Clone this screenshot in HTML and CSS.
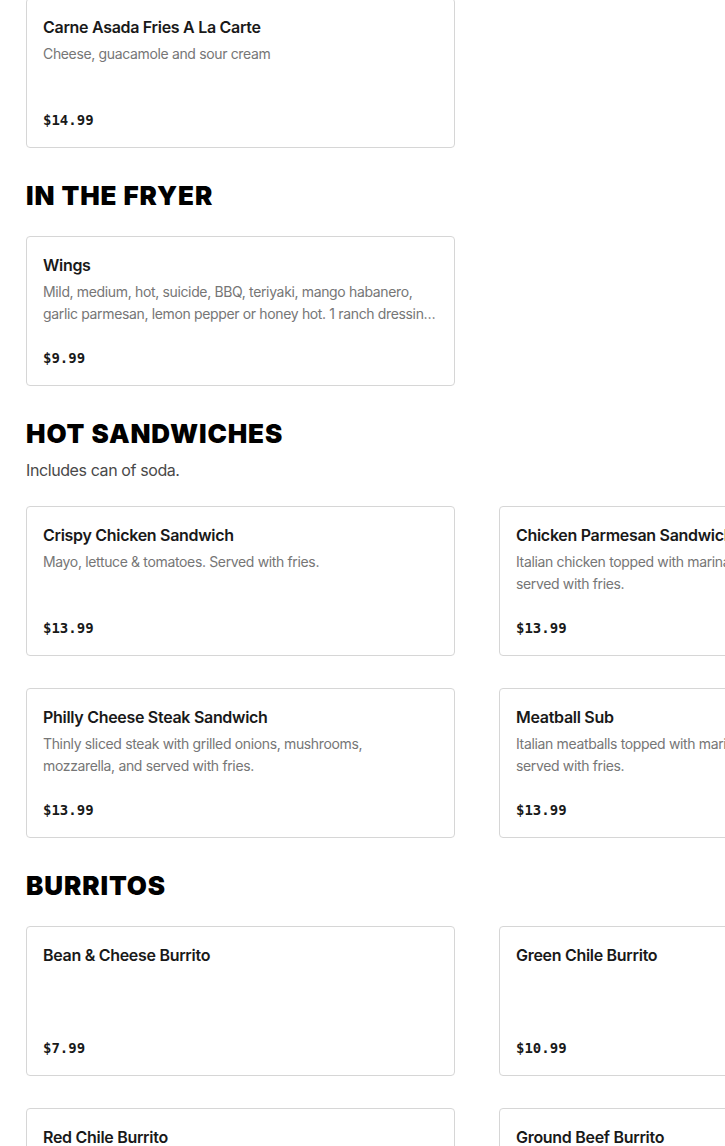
FILE: index.html
```html
<!DOCTYPE html>
<html lang="en">
<head>
<meta charset="utf-8">
<title>Menu</title>
<link rel="stylesheet" href="styles.css">
</head>
<body>
<main class="menu">
  <section class="section section-first">
    <div class="grid">
      <article class="card">
        <h3 class="item-name">Carne Asada Fries A La Carte</h3>
        <p class="item-desc">Cheese, guacamole and sour cream</p>
        <div class="item-price">$14.99</div>
      </article>
    </div>
  </section>

  <section class="section">
    <h2 class="section-title">IN THE FRYER</h2>
    <div class="grid">
      <article class="card">
        <h3 class="item-name">Wings</h3>
        <p class="item-desc">Mild, medium, hot, suicide, BBQ, teriyaki, mango habanero, garlic parmesan, lemon pepper or honey hot. 1 ranch dressing included with every order.</p>
        <div class="item-price">$9.99</div>
      </article>
    </div>
  </section>

  <section class="section">
    <h2 class="section-title">HOT SANDWICHES</h2>
    <p class="section-sub">Includes can of soda.</p>
    <div class="grid">
      <article class="card">
        <h3 class="item-name">Crispy Chicken Sandwich</h3>
        <p class="item-desc">Mayo, lettuce &amp; tomatoes. Served with fries.</p>
        <div class="item-price">$13.99</div>
      </article>
      <article class="card">
        <h3 class="item-name">Chicken Parmesan Sandwich</h3>
        <p class="item-desc">Italian chicken topped with marinara sauce, mozzarella and served with fries.</p>
        <div class="item-price">$13.99</div>
      </article>
      <article class="card">
        <h3 class="item-name">Philly Cheese Steak Sandwich</h3>
        <p class="item-desc">Thinly sliced steak with grilled onions, mushrooms, mozzarella, and served with fries.</p>
        <div class="item-price">$13.99</div>
      </article>
      <article class="card">
        <h3 class="item-name">Meatball Sub</h3>
        <p class="item-desc">Italian meatballs topped with marinara sauce, mozzarella and served with fries.</p>
        <div class="item-price">$13.99</div>
      </article>
    </div>
  </section>

  <section class="section">
    <h2 class="section-title">BURRITOS</h2>
    <div class="grid">
      <article class="card">
        <h3 class="item-name">Bean &amp; Cheese Burrito</h3>
        <div class="item-price">$7.99</div>
      </article>
      <article class="card">
        <h3 class="item-name">Green Chile Burrito</h3>
        <div class="item-price">$10.99</div>
      </article>
      <article class="card">
        <h3 class="item-name">Red Chile Burrito</h3>
        <div class="item-price">$10.99</div>
      </article>
      <article class="card">
        <h3 class="item-name">Ground Beef Burrito</h3>
        <div class="item-price">$10.99</div>
      </article>
    </div>
  </section>
</main>
</body>
</html>
```
FILE: styles.css
```css
html, body {
  margin: 0;
  padding: 0;
  overflow: hidden;
  background: #ffffff;
}
body {
  font-family: Inter, "Liberation Sans", Arial, sans-serif;
  color: #191919;
}
.menu {
  padding: 0 26px;
  width: 902px;
}
.section {
  padding-top: 32px;
}
.section-first {
  padding-top: 0;
  margin-top: -2px;
}
.section-title {
  margin: 0 0 24px;
  font-size: 26px;
  line-height: 32px;
  font-weight: 900;
  color: #000000;
  letter-spacing: 0.9px;
}
.section-sub {
  margin: -16px 0 24px;
  font-size: 16px;
  line-height: 24px;
  color: #494949;
  letter-spacing: -0.4px;
}
.grid {
  display: grid;
  grid-template-columns: 429px 429px;
  column-gap: 44px;
  row-gap: 32px;
}
.card {
  box-sizing: border-box;
  height: 150px;
  border: 1px solid #d6d6d6;
  border-radius: 4px;
  padding: 16px 18px 15px 16px;
  display: flex;
  flex-direction: column;
  background: #fff;
}
.item-name {
  margin: 0;
  font-size: 16px;
  line-height: 24px;
  font-weight: 600;
  color: #191919;
  letter-spacing: -0.3px;
  white-space: nowrap;
}
.item-desc {
  margin: 4px 0 0;
  font-size: 14px;
  line-height: 22px;
  color: #767676;
  letter-spacing: -0.35px;
  display: -webkit-box;
  -webkit-line-clamp: 2;
  -webkit-box-orient: vertical;
  overflow: hidden;
}
.item-price {
  margin-top: auto;
  font-family: "DejaVu Sans Mono", "Liberation Mono", monospace;
  font-size: 14px;
  line-height: 24px;
  font-weight: 700;
  color: #191919;
}
```
